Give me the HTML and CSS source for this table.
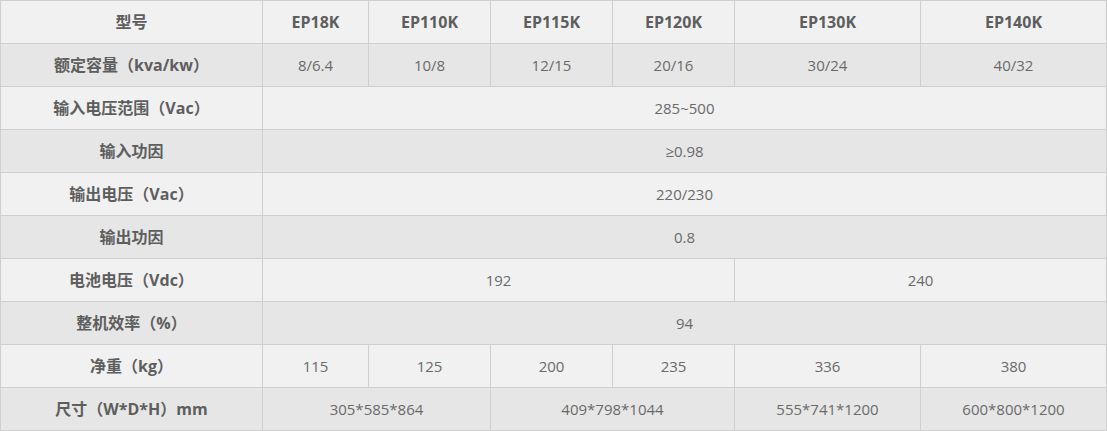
FILE: index.html
```html
<!DOCTYPE html>
<html lang="zh">
<head>
<meta charset="utf-8">
<link rel="stylesheet" href="styles.css">
</head>
<body>
<table class="spec">
<colgroup>
<col class="c0"><col class="c1"><col class="c2"><col class="c3"><col class="c4"><col class="c5"><col class="c6">
</colgroup>
<tr class="odd"><th>型号</th><th>EP18K</th><th>EP110K</th><th>EP115K</th><th>EP120K</th><th>EP130K</th><th>EP140K</th></tr>
<tr class="even"><th>额定容量（kva/kw）</th><td>8/6.4</td><td>10/8</td><td>12/15</td><td>20/16</td><td>30/24</td><td>40/32</td></tr>
<tr class="odd"><th>输入电压范围（Vac）</th><td colspan="6">285~500</td></tr>
<tr class="even"><th>输入功因</th><td colspan="6">≥0.98</td></tr>
<tr class="odd"><th>输出电压（Vac）</th><td colspan="6">220/230</td></tr>
<tr class="even"><th>输出功因</th><td colspan="6">0.8</td></tr>
<tr class="odd"><th>电池电压（Vdc）</th><td colspan="4">192</td><td colspan="2">240</td></tr>
<tr class="even"><th>整机效率（%）</th><td colspan="6">94</td></tr>
<tr class="odd"><th>净重（kg）</th><td>115</td><td>125</td><td>200</td><td>235</td><td>336</td><td>380</td></tr>
<tr class="even"><th>尺寸（W*D*H）mm</th><td colspan="2">305*585*864</td><td colspan="2">409*798*1044</td><td>555*741*1200</td><td>600*800*1200</td></tr>
</table>
</body>
</html>
```
FILE: styles.css
```css
html, body {
  margin: 0;
  padding: 0;
  background: #ffffff;
}
.spec {
  border-collapse: collapse;
  table-layout: fixed;
  width: 1106px;
  font-family: "Open Sans", "Noto Sans CJK SC", sans-serif;
  font-size: 16px;
  color: #6a6a6a;
}
.c0 { width: 262px; }
.c1 { width: 106px; }
.c2 { width: 122px; }
.c3 { width: 122px; }
.c4 { width: 122px; }
.c5 { width: 186px; }
.c6 { width: 186px; }
.spec th, .spec td {
  border: 1px solid #cfcfcf;
  height: 42px;
  padding: 0;
  text-align: center;
  vertical-align: middle;
  line-height: 20px;
}
.spec th {
  font-weight: 700;
  font-size: 16px;
  color: #5e5e5e;
}
.spec td {
  font-weight: 400;
  font-size: 15px;
}
.odd { background: #f1f1f1; }
.even { background: #e6e6e6; }
```
